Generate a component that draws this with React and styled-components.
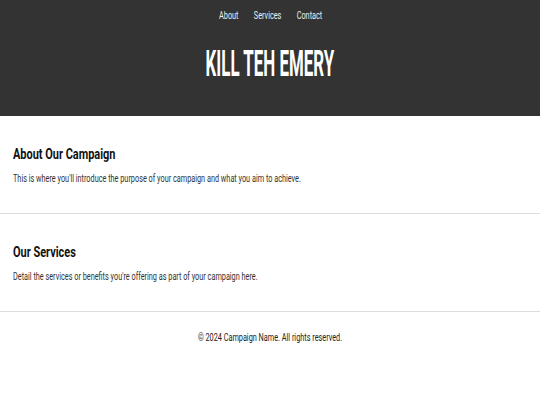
import React from 'react';
import styled, { createGlobalStyle, css } from 'styled-components';

const GlobalStyle = createGlobalStyle`
  html, body {
    margin: 0;
    padding: 0;
    background: #fff;
  }
  body {
    font-family: 'Roboto', 'Liberation Sans', sans-serif;
    color: #222;
  }
`;

// no condensed face is installed, so squeeze Roboto sideways
const narrow = (origin = 'left') => css`
  transform: scaleX(0.73);
  transform-origin: ${origin} center;
`;

const Header = styled.header`
  background: #333333;
  color: #fff;
  height: 116px;
  box-sizing: border-box;
  padding-top: 10px;
  display: flex;
  flex-direction: column;
  align-items: center;
`;

const Nav = styled.nav`
  display: flex;
  gap: 21px;
  font-size: 10px;
  line-height: 12px;
  ${narrow('center')}
  margin-left: 2px;
  a {
    color: #eee;
    text-decoration: none;
  }
`;

const Title = styled.h1`
  margin: 22px 0 0;
  font-family: 'Roboto', 'Liberation Sans', sans-serif;
  font-weight: 700;
  font-size: 36px;
  line-height: 40px;
  color: #fff;
  transform: scaleX(0.47);
  transform-origin: center center;
  white-space: nowrap;
`;

const Section = styled.section`
  height: 98px;
  box-sizing: border-box;
  padding: 29px 13px 0;
  border-bottom: 1px solid #dddddd;
`;

const Heading = styled.h2`
  margin: 0;
  font-size: 15px;
  line-height: 18px;
  font-weight: 700;
  color: #111;
  ${narrow()}
`;

const Text = styled.p`
  margin: 10px 0 0;
  font-size: 10px;
  line-height: 12px;
  color: #333;
  white-space: nowrap;
  ${narrow()}
`;

const Footer = styled.footer`
  text-align: center;
  padding-top: 20px;
  font-size: 10px;
  line-height: 12px;
  color: #222;
  ${narrow('center')}
`;

export default function App() {
  return (
    <>
      <GlobalStyle />
      <Header>
        <Nav>
          <a href="#about">About</a>
          <a href="#services">Services</a>
          <a href="#contact">Contact</a>
        </Nav>
        <Title>KILL TEH EMERY</Title>
      </Header>
      <Section id="about">
        <Heading>About Our Campaign</Heading>
        <Text>This is where you'll introduce the purpose of your campaign and what you aim to achieve.</Text>
      </Section>
      <Section id="services">
        <Heading>Our Services</Heading>
        <Text>Detail the services or benefits you're offering as part of your campaign here.</Text>
      </Section>
      <Footer>© 2024 Campaign Name. All rights reserved.</Footer>
    </>
  );
}
